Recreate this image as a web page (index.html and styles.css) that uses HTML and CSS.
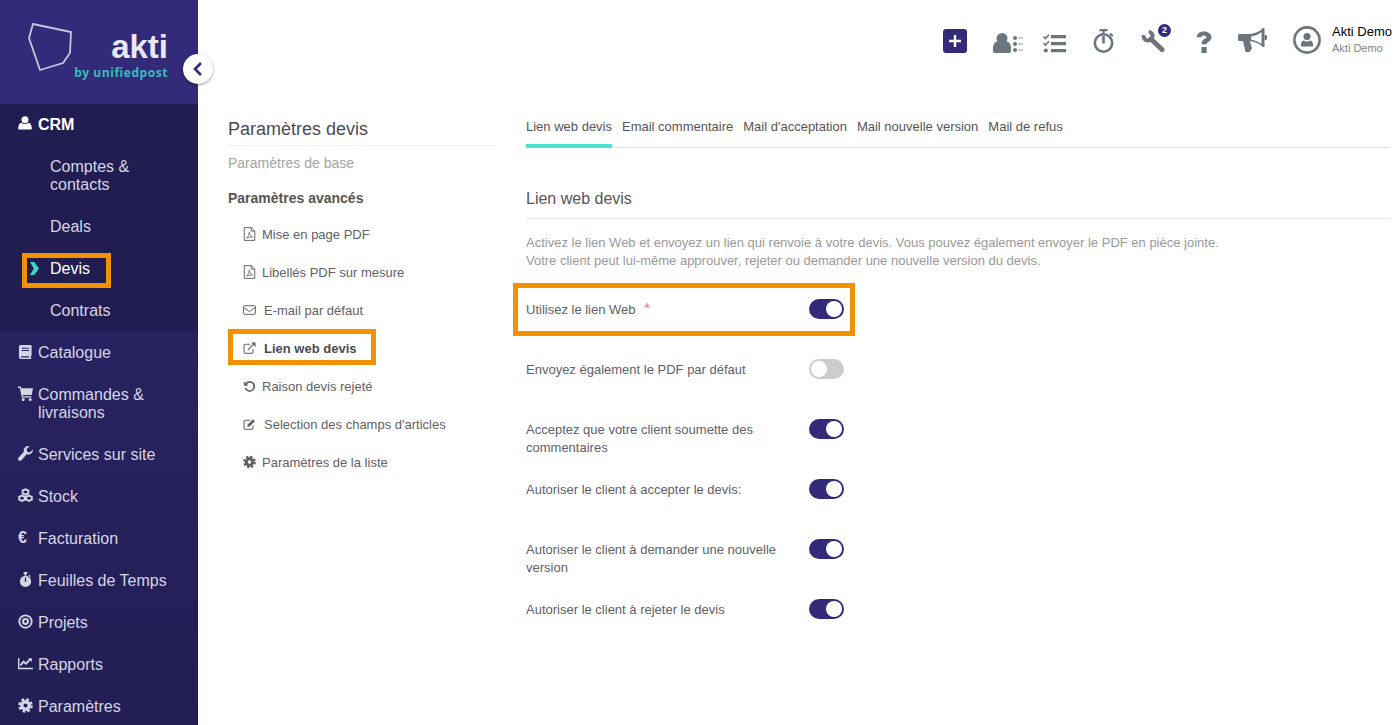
FILE: index.html
```html
<!DOCTYPE html>
<html lang="fr">
<head>
    <meta charset="UTF-8">
    <title>Paramètres devis</title>
    <link rel="stylesheet" href="styles.css">
</head>
<body>
    <svg class="icon-defs" width="0" height="0">
        <symbol id="i-user" viewBox="0 0 16 16"><circle cx="8" cy="4.200" r="4"/><path d="M1.500 15.500c-.8 0-1.300-.5-1.300-1.300C.2 11 1.500 8 3.800 7.700c1 .9 2.600 1.400 4.200 1.400s3.200-.5 4.200-1.400c2.300.3 3.600 3.300 3.600 6.500 0 .8-.5 1.300-1.300 1.300z"/></symbol>
        <symbol id="i-book" viewBox="0 0 16 16"><path d="M3 1h10.500c.5 0 1 .4 1 1v10c0 .4-.3.700-.7.800-.3.600-.3 1.200 0 1.700.3.100.5.300.5.500 0 .6-.4 1-1 1H3.500C2.200 16 1 15 1 13.500V3c0-1.200.9-2 2-2zm1 3v1h8V4zm0 2.500v1h8v-1zM3.500 13c-.5 0-.7.300-.7.700s.3.700.7.700h8.200c-.1-.5-.1-1 0-1.400z"/></symbol>
        <symbol id="i-cart" viewBox="0 0 16 16"><path d="M0 .5h3l.5 1.800H16l-1.400 7.200H5l.3 1.300h9v1.500H4L2 2H0z"/><circle cx="5.500" cy="14.300" r="1.600"/><circle cx="13" cy="14.300" r="1.600"/></symbol>
        <symbol id="i-wrench" viewBox="0 0 16 16"><path d="M15.800 3.600c.3 2-.6 4-2.400 5-1.400.7-2.800.7-4.100.2l-5.600 6.300c-.8.900-2.200 1-3 .2-.9-.8-.9-2.100-.1-3l5.700-6.200C5.800 4.600 6.200 2.600 7.700 1.300 9 .2 10.800-.2 12.300.3L9.200 3.200l.6 2.900 2.900.8z"/></symbol>
        <symbol id="i-cubes" viewBox="0 0 16 16"><path d="M8 1.500l3 1.200v3L8 7 5 5.700v-3zM4.300 8.200l2.900 1.200v3L4.300 13.800 1.300 12.400v-3zM11.700 8.200l3 1.200v3l-3 1.400-2.900-1.400v-3z" fill="none" stroke="currentColor" stroke-width="2.100"/></symbol>
        <symbol id="i-watch" viewBox="0 0 16 16"><rect x="6" y="0" width="4" height="2"/><rect x="7" y="1" width="2" height="3"/><path d="M12 3l1.500 1.500-1 1L11 4z"/><circle cx="8" cy="10" r="6"/><rect x="7.300" y="6" width="1.400" height="4.500" fill="#2b2464"/></symbol>
        <symbol id="i-target" viewBox="0 0 16 16"><circle cx="8" cy="8" r="6.600" fill="none" stroke="currentColor" stroke-width="2"/><circle cx="8" cy="8" r="2.600" fill="none" stroke="currentColor" stroke-width="2.200"/></symbol>
        <symbol id="i-chart" viewBox="0 0 16 16"><path d="M0 2h1.500v10.500H16V14H0z"/><path d="M2.500 10l3.500-4 2.500 2.200L13 3.500" fill="none" stroke="currentColor" stroke-width="2"/><path d="M10.800 2.500h4v4z"/></symbol>
        <symbol id="i-cog" viewBox="0 0 16 16"><circle cx="8" cy="8" r="4" fill="none" stroke="currentColor" stroke-width="3.600"/><circle cx="8" cy="8" r="6.500" fill="none" stroke="currentColor" stroke-width="2.600" stroke-dasharray="2.900 2.200"/></symbol>
        <symbol id="i-pdf" viewBox="0 0 14 16"><path d="M1 .7h8l4 4v10.600H1zM9 .7v4h4" fill="none" stroke="currentColor" stroke-width="1.100"/><path d="M3.500 12.800c1.500-1 3-4 3.200-6.800.5 2.500 1.500 4.500 3.800 5.500-2-.3-4.500.2-7 1.300z" fill="none" stroke="currentColor" stroke-width=".9"/></symbol>
        <symbol id="i-mail" viewBox="0 0 16 16"><rect x=".7" y="2.700" width="14.600" height="10.600" rx="1.300" fill="none" stroke="currentColor" stroke-width="1.200"/><path d="M1 5l7 5 7-5" fill="none" stroke="currentColor" stroke-width="1.200"/></symbol>
        <symbol id="i-link" viewBox="0 0 16 16"><path d="M12.300 9v3.800c0 1-.7 1.700-1.700 1.700H3c-1 0-1.700-.7-1.700-1.700V5.200c0-1 .7-1.700 1.700-1.700h6" fill="none" stroke="currentColor" stroke-width="1.300"/><path d="M6 10.300L13.500 3" fill="none" stroke="currentColor" stroke-width="1.500"/><path d="M10 1.300h5.500v5.500z"/></symbol>
        <symbol id="i-undo" viewBox="0 0 16 16"><path d="M3.800 5.200A5.600 5.600 0 1 1 3 10.500" fill="none" stroke="currentColor" stroke-width="2.100"/><path d="M1 2v5.800h5.800z"/></symbol>
        <symbol id="i-edit" viewBox="0 0 16 16"><path d="M12.300 9.500v3.300c0 1-.7 1.700-1.700 1.700H3c-1 0-1.700-.7-1.700-1.700V5.200c0-1 .7-1.700 1.700-1.700h6" fill="none" stroke="currentColor" stroke-width="1.300"/><path d="M5.800 8.700L12.300 2.200l2.300 2.300-6.500 6.500-2.800.6z"/></symbol>
    </svg>

    <div class="app">
        <aside class="sidebar">
            <div class="brand">
                <svg class="brand-mark" width="46" height="50" viewBox="0 0 46 50"><path d="M6 2l38 8-1 21-7 10-23 7L2 16z" fill="none" stroke="#c9c6dc" stroke-width="1.800"/></svg>
                <div class="brand-name">akti</div>
                <div class="brand-sub">by unifiedpost</div>
                <button class="collapse-btn" type="button">
                    <svg width="12" height="16" viewBox="0 0 12 16"><path d="M9 2L3 8l6 6" fill="none" stroke="#332b7a" stroke-width="2.600"/></svg>
                </button>
            </div>
            <nav class="nav">
                <div class="nav-open">
                    <a class="nav-item nav-crm"><svg class="nav-icon"><use href="#i-user"/></svg>CRM</a>
                    <a class="nav-sub">Comptes &amp; contacts</a>
                    <a class="nav-sub">Deals</a>
                    <a class="nav-sub is-active"><span class="marker marker-devis"></span><svg class="chevron" width="9" height="13" viewBox="0 0 9 13"><path d="M0 0h4.300L9 6.500 4.300 13H0l3.800-6.500z"/></svg>Devis</a>
                    <a class="nav-sub">Contrats</a>
                </div>
                <a class="nav-item"><svg class="nav-icon"><use href="#i-book"/></svg>Catalogue</a>
                <a class="nav-item"><svg class="nav-icon"><use href="#i-cart"/></svg>Commandes &amp; livraisons</a>
                <a class="nav-item"><svg class="nav-icon"><use href="#i-wrench"/></svg>Services sur site</a>
                <a class="nav-item"><svg class="nav-icon"><use href="#i-cubes"/></svg>Stock</a>
                <a class="nav-item"><span class="nav-icon euro">€</span>Facturation</a>
                <a class="nav-item"><svg class="nav-icon"><use href="#i-watch"/></svg>Feuilles de Temps</a>
                <a class="nav-item"><svg class="nav-icon"><use href="#i-target"/></svg>Projets</a>
                <a class="nav-item"><svg class="nav-icon"><use href="#i-chart"/></svg>Rapports</a>
                <a class="nav-item"><svg class="nav-icon"><use href="#i-cog"/></svg>Paramètres</a>
            </nav>
        </aside>

        <div class="page">
            <header class="topbar">
                <button class="add-btn" type="button"><svg width="12" height="12" viewBox="0 0 12 12"><path d="M6 0v12M0 6h12" stroke="#fff" stroke-width="2.400"/></svg></button>
                <svg class="top-icon top-contacts" width="30" height="20" viewBox="0 0 30 20"><circle cx="9" cy="5.500" r="5.500"/><path d="M0 18v-3c0-3.500 1.500-6 4-6.500 3 2.500 7 2.500 10 0 2.500.5 4 3 4 6.500v3c0 1.200-.8 2-2 2H2c-1.200 0-2-.8-2-2z"/><circle cx="22" cy="5" r="2"/><circle cx="22" cy="11" r="2"/><circle cx="22" cy="17" r="2"/><path d="M25 5h5M25 11h5M25 17h5" stroke="#9aa0a6" stroke-width="1"/></svg>
                <svg class="top-icon top-tasks" width="23" height="19" viewBox="0 0 23 19"><path d="M.5 2.500l2 2L6 .8M.5 9l2 2L6 7.300" fill="none" stroke="#6c757d" stroke-width="1.600"/><circle cx="2.800" cy="16.500" r="2.100"/><path d="M8 1h15v3.200H8zM8 8h15v3.200H8zM8 15h15v3.200H8z"/></svg>
                <svg class="top-icon top-watch" width="21" height="24" viewBox="0 0 21 24"><path d="M6.500 1.100h8M10.500 1v4M17 4.500l2.800 2.800" fill="none" stroke="#6c757d" stroke-width="2.200"/><circle cx="10.500" cy="14" r="8.700" fill="none" stroke="#6c757d" stroke-width="2.600"/><path d="M10.500 7v7.500" stroke="#6c757d" stroke-width="2.600"/></svg>
                <div class="top-tools">
                    <svg class="top-icon" width="24" height="23" viewBox="0 0 24 23"><path d="M7.800 2.600A4.500 4.500 0 1 1 2.600 6.200" fill="none" stroke="#6c757d" stroke-width="4"/><path d="M10 10l11 10.500" stroke="#6c757d" stroke-width="5" stroke-linecap="round"/></svg>
                    <span class="tools-badge">2</span>
                </div>
                <svg class="top-icon top-help" width="16" height="22" viewBox="0 0 16 22"><path d="M.5 6C1.300 2.200 4.300.5 8 .5c4 0 7.500 2.500 7.500 5.800 0 2.800-1.800 3.900-3.200 4.700-1.200.7-1.600 1.200-1.600 2.300H5.500c0-2.800 1-4 2.600-5 1.200-.7 2.200-1.200 2.200-2.100 0-1-1.100-1.600-2.300-1.600-1.500 0-2.500.8-3.300 2z"/><rect x="5.500" y="16" width="5.200" height="6"/></svg>
                <svg class="top-icon top-mega" width="29" height="24" viewBox="0 0 29 24"><path d="M0 7.500C0 6.700.7 6 1.500 6H10C16 6 21 4 25 0h1.500v19H25c-3.500-3.500-8-5.500-13-6l2 7.500-2.500 3.500h-4L5 13H1.500C.7 13 0 12.300 0 11.500z"/><path d="M23.500 4c-3 2.500-6.300 3.800-10.300 4.500v3.200c3.800.6 7.300 1.900 10.300 4.300z" fill="#fff"/><rect x="26.500" y="7" width="2.500" height="5" rx="1"/></svg>
                <svg class="top-icon top-avatar" width="28" height="28" viewBox="0 0 28 28"><circle cx="14" cy="14" r="12.600" fill="none" stroke="#6c757d" stroke-width="2.600"/><circle cx="14" cy="10.500" r="3.500"/><path d="M8 20.500v-2c0-2.500 1.200-3.700 2.500-4 2 1.500 5 1.500 7 0 1.300.3 2.500 1.500 2.500 4v2z"/></svg>
                <div class="account">
                    <div class="account-name">Akti Demo</div>
                    <div class="account-org">Akti Demo</div>
                </div>
            </header>

            <main class="content">
                <section class="settings-menu">
                    <h2 class="menu-title">Paramètres devis</h2>
                    <div class="menu-base">Paramètres de base</div>
                    <div class="menu-heading">Paramètres avancés</div>
                    <a class="menu-item"><svg class="menu-icon"><use href="#i-pdf"/></svg>Mise en page PDF</a>
                    <a class="menu-item"><svg class="menu-icon"><use href="#i-pdf"/></svg>Libellés PDF sur mesure</a>
                    <a class="menu-item wide"><svg class="menu-icon"><use href="#i-mail"/></svg>E-mail par défaut</a>
                    <a class="menu-item wide is-active"><span class="marker marker-link"></span><svg class="menu-icon"><use href="#i-link"/></svg>Lien web devis</a>
                    <a class="menu-item"><svg class="menu-icon"><use href="#i-undo"/></svg>Raison devis rejeté</a>
                    <a class="menu-item wide"><svg class="menu-icon"><use href="#i-edit"/></svg>Selection des champs d'articles</a>
                    <a class="menu-item"><svg class="menu-icon"><use href="#i-cog"/></svg>Paramètres de la liste</a>
                </section>

                <section class="settings-panel">
                    <div class="tabs">
                        <a class="tab is-active">Lien web devis</a>
                        <a class="tab">Email commentaire</a>
                        <a class="tab">Mail d'acceptation</a>
                        <a class="tab">Mail nouvelle version</a>
                        <a class="tab">Mail de refus</a>
                    </div>
                    <h3 class="panel-title">Lien web devis</h3>
                    <p class="panel-text">Activez le lien Web et envoyez un lien qui renvoie à votre devis. Vous pouvez également envoyer le PDF en pièce jointe.<br>Votre client peut lui-même approuver, rejeter ou demander une nouvelle version du devis.</p>
                    <div class="option">
                        <span class="marker marker-option"></span>
                        <label class="option-label">Utilisez le lien Web <span class="required">*</span></label>
                        <span class="switch on"></span>
                    </div>
                    <div class="option">
                        <label class="option-label">Envoyez également le PDF par défaut</label>
                        <span class="switch"></span>
                    </div>
                    <div class="option">
                        <label class="option-label">Acceptez que votre client soumette des commentaires</label>
                        <span class="switch on"></span>
                    </div>
                    <div class="option">
                        <label class="option-label">Autoriser le client à accepter le devis:</label>
                        <span class="switch on"></span>
                    </div>
                    <div class="option">
                        <label class="option-label">Autoriser le client à demander une nouvelle version</label>
                        <span class="switch on"></span>
                    </div>
                    <div class="option">
                        <label class="option-label">Autoriser le client à rejeter le devis</label>
                        <span class="switch on"></span>
                    </div>
                </section>
            </main>
        </div>
    </div>
</body>
</html>
```

FILE: styles.css
```css
* {
    margin: 0;
    padding: 0;
    box-sizing: border-box;
}

html, body {
    height: 100%;
    overflow: hidden;
}

body {
    font-family: 'Liberation Sans', Arial, sans-serif;
    color: #555;
    background: #fff;
}

.icon-defs {
    position: absolute;
}

.app {
    display: flex;
    height: 725px;
}

/* sidebar */
.sidebar {
    width: 198px;
    flex-shrink: 0;
    background: linear-gradient(180deg, #2d2569 0%, #231e55 100%);
}

.brand {
    position: relative;
    height: 104px;
    background: #332b7a;
    padding: 31px 30px 0 0;
    text-align: right;
}

.brand-mark {
    position: absolute;
    left: 27px;
    top: 22px;
}

.brand-name {
    font-size: 33px;
    line-height: 32px;
    font-weight: bold;
    color: #e8e7f2;
}

.brand-sub {
    font-size: 12px;
    line-height: 14px;
    margin-top: 3px;
    font-weight: bold;
    color: #38bdb9;
    letter-spacing: 0.55px;
    font-family: 'Open Sans', sans-serif;
}

.collapse-btn {
    position: absolute;
    left: 183px;
    top: 54px;
    width: 30px;
    height: 30px;
    border: 0;
    border-radius: 50%;
    background: #fff;
    box-shadow: 0 1px 3px rgba(0, 0, 0, 0.4);
    display: flex;
    align-items: center;
    justify-content: center;
}

.nav-open {
    background: #211d50;
}

.nav-item {
    display: flex;
    padding: 13px 20px 11px 38px;
    font-size: 16px;
    line-height: 18px;
    color: #d6d5e6;
    position: relative;
}

.nav-crm {
    padding-top: 12px;
    font-weight: bold;
    color: #fff;
}

.nav-icon {
    position: absolute;
    left: 18px;
    top: 13px;
    width: 15px;
    height: 15px;
    fill: #d6d5e6;
    color: #d6d5e6;
}

.nav-crm .nav-icon {
    top: 12px;
    width: 14px;
    height: 14px;
    fill: #fff;
}

.euro {
    font-weight: bold;
    font-size: 16px;
    line-height: 15px;
}

.nav-sub {
    display: block;
    position: relative;
    padding: 13px 40px 11px 50px;
    font-size: 16px;
    line-height: 18px;
    color: #d6d5e6;
}

.nav-sub.is-active {
    color: #fff;
}

.chevron {
    position: absolute;
    left: 30px;
    top: 15px;
    fill: #3ed6c5;
}

/* orange annotation boxes */
.marker {
    position: absolute;
    border: 5px solid #f39200;
    pointer-events: none;
}

.marker-devis {
    left: 22px;
    top: 6px;
    width: 89px;
    height: 35px;
}

.marker-link {
    left: 0;
    top: 0;
    width: 148px;
    height: 36px;
}

.marker-option {
    left: -13px;
    top: 4px;
    width: 342px;
    height: 53px;
}

/* top bar */
.page {
    flex: 1;
    min-width: 0;
}

.topbar {
    height: 104px;
    display: flex;
    align-items: flex-start;
    padding-top: 29px;
    padding-left: 745px;
}

.add-btn {
    width: 24px;
    height: 24px;
    border: 0;
    border-radius: 3px;
    background: #332b7a;
    display: flex;
    align-items: center;
    justify-content: center;
}

.top-icon {
    fill: #6c757d;
    flex-shrink: 0;
}

.top-contacts {
    margin: 4px 0 0 26px;
}

.top-tasks {
    margin: 5px 0 0 20px;
}

.top-watch {
    margin: 0 0 0 27px;
}

.top-tools {
    position: relative;
    margin: 0 0 0 27px;
    width: 24px;
    height: 23px;
}

.tools-badge {
    position: absolute;
    left: 17px;
    top: -5px;
    width: 13px;
    height: 13px;
    border-radius: 50%;
    background: #332b7a;
    color: #fff;
    font-size: 9px;
    font-weight: bold;
    line-height: 13px;
    text-align: center;
}

.top-help {
    margin: 2px 0 0 31px;
}

.top-mega {
    margin: -1px 0 0 26px;
}

.top-avatar {
    margin: -3px 0 0 26px;
}

.account {
    margin: -4px 0 0 11px;
    white-space: nowrap;
}

.account-name {
    font-size: 13px;
    line-height: 14px;
    color: #000;
}

.account-org {
    font-size: 11px;
    line-height: 14px;
    margin-top: 2px;
    color: #7d8389;
}

/* content */
.content {
    display: flex;
    padding-left: 30px;
}

.settings-menu {
    width: 268px;
    flex-shrink: 0;
}

.menu-title {
    font-size: 18px;
    font-weight: normal;
    line-height: 21px;
    color: #4a4a55;
    padding-top: 15px;
    border-bottom: 1px solid #eee;
    height: 42px;
}

.menu-base {
    font-size: 14px;
    line-height: 16px;
    margin-top: 9px;
    color: #a5a5a5;
}

.menu-heading {
    font-size: 14px;
    line-height: 16px;
    margin-top: 19px;
    margin-bottom: 9px;
    font-weight: bold;
    color: #555;
}

.menu-item {
    display: flex;
    align-items: center;
    position: relative;
    height: 38px;
    padding-left: 34px;
    font-size: 13px;
    color: #5f6068;
}

.menu-item.wide {
    padding-left: 36px;
}

.menu-item.is-active {
    font-weight: bold;
    color: #4b4b55;
}

.menu-icon {
    position: absolute;
    left: 15px;
    top: 12px;
    width: 13px;
    height: 14px;
    fill: #5f6068;
    color: #5f6068;
}

.settings-panel {
    margin-left: 30px;
    flex: 1;
    margin-right: 8px;
}

.tabs {
    display: flex;
    gap: 10px;
    height: 44px;
    border-bottom: 1px solid #ddd;
    font-size: 13px;
}

.tab {
    padding-top: 15px;
    height: 44px;
    line-height: 16px;
    color: #555;
}

.tab.is-active {
    border-bottom: 4px solid #4be3cf;
}

.panel-title {
    font-size: 16px;
    font-weight: normal;
    line-height: 18px;
    color: #555;
    margin-top: 42px;
    padding-bottom: 10px;
    border-bottom: 1px solid #e3e3e3;
}

.panel-text {
    font-size: 13px;
    line-height: 18px;
    color: #999;
    margin-top: 15px;
    margin-bottom: 9px;
}

.option {
    display: flex;
    align-items: flex-start;
    position: relative;
    width: 318px;
    height: 60px;
    padding-top: 20px;
}

.option-label {
    width: 283px;
    padding-right: 20px;
    font-size: 13px;
    line-height: 18px;
    color: #5f6068;
    margin-top: 2px;
}

.required {
    color: #e8748a;
    margin-left: 5px;
    font-size: 15px;
    line-height: 0;
    vertical-align: 1px;
}

.switch {
    position: relative;
    width: 35px;
    height: 20px;
    border-radius: 10px;
    background: #ccc;
    flex-shrink: 0;
}

.switch::after {
    content: "";
    position: absolute;
    left: 2px;
    top: 2px;
    width: 16px;
    height: 16px;
    border-radius: 50%;
    background: #fff;
}

.switch.on {
    background: #332b7a;
}

.switch.on::after {
    left: 17px;
}
```
